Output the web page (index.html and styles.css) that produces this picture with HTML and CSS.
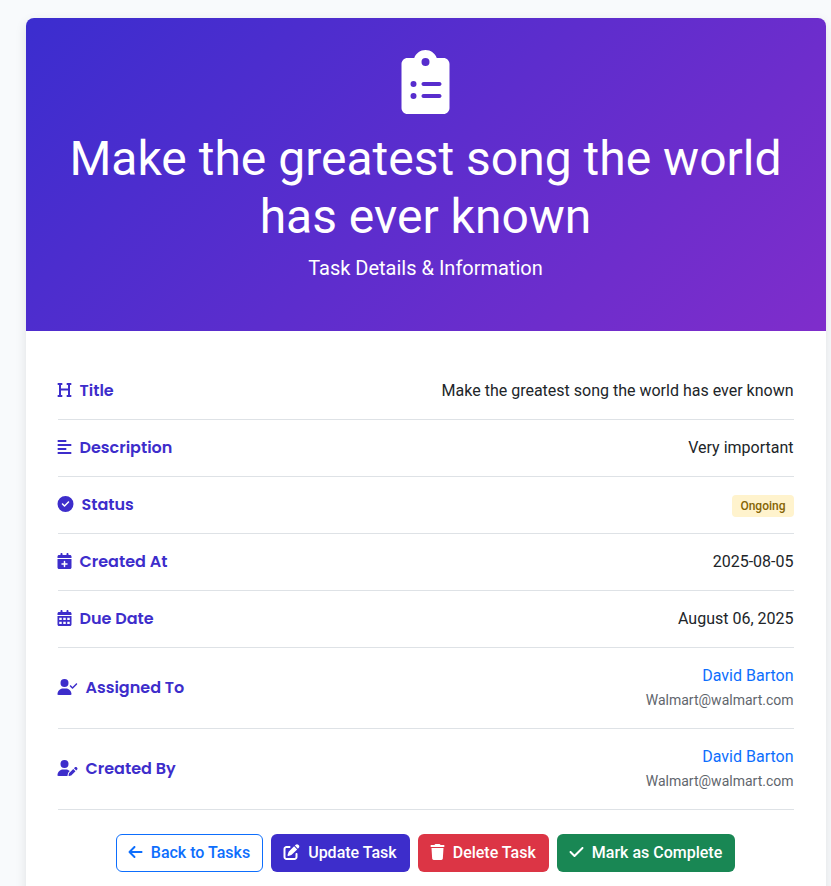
FILE: index.html
```html
<!DOCTYPE html>
<html lang="en">
<head>
<meta charset="utf-8">
<title>Task Details</title>
<link rel="stylesheet" href="styles.css">
</head>
<body>
<main class="card">
  <header class="hero">
    <svg class="hero-icon" viewBox="0 0 384 512"><path fill-rule="evenodd" d="M336 64h-53.9C268.9 26.8 233.7 0 192 0S115.1 26.8 101.9 64H48C21.5 64 0 85.5 0 112v352c0 26.500 21.500 48 48 48h288c26.500 0 48-21.500 48-48V112c0-26.500-21.500-48-48-48zM192 64a32 32 0 1 1 0 64 32 32 0 1 1 0-64zM72 272a24 24 0 1 1 48 0 24 24 0 1 1-48 0zm104-16h128c8.800 0 16 7.200 16 16s-7.200 16-16 16H176c-8.800 0-16-7.200-16-16s7.200-16 16-16zM72 368a24 24 0 1 1 48 0 24 24 0 1 1-48 0zm104-16h128c8.800 0 16 7.200 16 16s-7.200 16-16 16H176c-8.800 0-16-7.200-16-16s7.200-16 16-16z"/></svg>
    <h1>Make the greatest song the world has ever known</h1>
    <p>Task Details &amp; Information</p>
  </header>
  <div class="body">
    <div class="row">
      <div class="label"><svg class="icon" viewBox="0 0 448 512"><path d="M0 64C0 46.300 14.300 32 32 32h96c17.700 0 32 14.300 32 32s-14.300 32-32 32h-16v112h224V96h-16c-17.700 0-32-14.300-32-32s14.300-32 32-32h96c17.700 0 32 14.300 32 32s-14.300 32-32 32h-16v320h16c17.700 0 32 14.300 32 32s-14.300 32-32 32h-96c-17.700 0-32-14.300-32-32s14.300-32 32-32h16V272H112v144h16c17.700 0 32 14.300 32 32s-14.300 32-32 32H32c-17.700 0-32-14.300-32-32s14.300-32 32-32h16V96H32C14.300 96 0 81.700 0 64z"/></svg>Title</div>
      <div class="value">Make the greatest song the world has ever known</div>
    </div>
    <div class="row">
      <div class="label"><svg class="icon" viewBox="0 0 448 512"><path d="M288 64c0 17.700-14.300 32-32 32H32C14.300 96 0 81.700 0 64s14.300-32 32-32h224c17.700 0 32 14.300 32 32zm0 256c0 17.700-14.300 32-32 32H32c-17.700 0-32-14.300-32-32s14.300-32 32-32h224c17.700 0 32 14.300 32 32zM0 192c0-17.700 14.300-32 32-32h384c17.700 0 32 14.300 32 32s-14.300 32-32 32H32c-17.700 0-32-14.300-32-32zm448 256c0 17.700-14.300 32-32 32H32c-17.700 0-32-14.300-32-32s14.300-32 32-32h384c17.700 0 32 14.300 32 32z"/></svg>Description</div>
      <div class="value">Very important</div>
    </div>
    <div class="row">
      <div class="label"><svg class="icon icon-md" viewBox="0 0 512 512"><path fill-rule="evenodd" d="M256 512A256 256 0 1 0 256 0a256 256 0 1 0 0 512zM369 209L241 337c-9.400 9.400-24.600 9.400-33.900 0l-64-64c-9.400-9.400-9.400-24.600 0-33.900s24.600-9.400 33.900 0l47 47L335 175c9.400-9.400 24.600-9.400 33.900 0s9.400 24.600 0 33.900z"/></svg>Status</div>
      <div class="value"><span class="badge">Ongoing</span></div>
    </div>
    <div class="row">
      <div class="label"><svg class="icon" viewBox="0 0 448 512"><path fill-rule="evenodd" d="M96 32v32H48C21.500 64 0 85.500 0 112v48h448v-48c0-26.500-21.500-48-48-48h-48V32c0-17.700-14.300-32-32-32s-32 14.300-32 32v32H160V32c0-17.700-14.300-32-32-32S96 14.300 96 32zM448 192H0v272c0 26.500 21.500 48 48 48h352c26.500 0 48-21.500 48-48V192zM224 248c13.300 0 24 10.700 24 24v56h56c13.300 0 24 10.700 24 24s-10.700 24-24 24h-56v56c0 13.300-10.700 24-24 24s-24-10.700-24-24v-56h-56c-13.300 0-24-10.700-24-24s10.700-24 24-24h56v-56c0-13.300 10.700-24 24-24z"/></svg>Created At</div>
      <div class="value">2025-08-05</div>
    </div>
    <div class="row">
      <div class="label"><svg class="icon" viewBox="0 0 448 512"><path fill-rule="evenodd" d="M96 32v32H48C21.500 64 0 85.500 0 112v48h448v-48c0-26.500-21.500-48-48-48h-48V32c0-17.700-14.300-32-32-32s-32 14.300-32 32v32H160V32c0-17.700-14.300-32-32-32S96 14.300 96 32zM448 192H0v272c0 26.500 21.500 48 48 48h352c26.500 0 48-21.500 48-48V192zM56 248h80v72H56zm128 0h80v72h-80zm128 0h80v72h-80zM56 376h80v72H56zm128 0h80v72h-80zm128 0h80v72h-80z"/></svg>Due Date</div>
      <div class="value">August 06, 2025</div>
    </div>
    <div class="row">
      <div class="label"><svg class="icon icon-lg" viewBox="0 0 640 512"><path d="M96 128a128 128 0 1 1 256 0 128 128 0 1 1-256 0zM0 482.300C0 383.800 79.800 304 178.300 304h91.400C368.200 304 448 383.800 448 482.300c0 16.400-13.300 29.700-29.700 29.700H29.700C13.300 512 0 498.700 0 482.300zM625 177L497 305c-9.400 9.400-24.600 9.400-33.900 0l-64-64c-9.400-9.400-9.400-24.600 0-33.900s24.600-9.400 33.900 0l47 47L591 143c9.400-9.400 24.600-9.400 33.900 0s9.400 24.600 0 33.900z"/></svg>Assigned To</div>
      <div class="value"><a>David Barton</a><small>Walmart@walmart.com</small></div>
    </div>
    <div class="row">
      <div class="label"><svg class="icon icon-lg" viewBox="0 0 640 512"><path d="M224 256A128 128 0 1 0 224 0a128 128 0 1 0 0 256zm-45.700 48C79.800 304 0 383.800 0 482.300 0 498.700 13.300 512 29.700 512h293.100c-3.100-8.800-3.700-18.400-1.400-27.800l15-60.100c2.800-11.300 8.600-21.500 16.800-29.700l40.300-40.300c-32.100-31-75.700-50.100-123.900-50.100zm435.500-68.300c-15.600-15.600-40.900-15.600-56.600 0l-29.400 29.400 71 71 29.400-29.400c15.600-15.600 15.600-40.900 0-56.600zM375.900 417c-4.100 4.100-7 9.200-8.400 14.900l-15 60.100c-1.400 5.500.2 11.200 4.200 15.200s9.700 5.600 15.200 4.200l60.100-15c5.600-1.400 10.800-4.300 14.900-8.400l129.200-129.300-71-71z"/></svg>Created By</div>
      <div class="value"><a>David Barton</a><small>Walmart@walmart.com</small></div>
    </div>
    <div class="actions">
      <button class="btn outline"><svg class="icon" viewBox="0 0 448 512"><path d="M9.400 233.400c-12.500 12.500-12.500 32.800 0 45.300l160 160c12.500 12.500 32.800 12.500 45.300 0s12.500-32.800 0-45.300L109.200 288H416c17.700 0 32-14.300 32-32s-14.300-32-32-32H109.300l105.300-105.400c12.500-12.500 12.500-32.800 0-45.300s-32.800-12.500-45.300 0z"/></svg>Back to Tasks</button>
      <button class="btn primary"><svg class="icon icon-md" viewBox="0 0 512 512"><path d="M471.600 21.700c-21.900-21.900-57.300-21.900-79.200 0l-30.100 30 97.900 97.900 30.100-30.100c21.900-21.900 21.900-57.300 0-79.200zm-299.200 220c-6.100 6.100-10.800 13.600-13.500 21.900l-29.600 88.800c-2.900 8.600-.6 18.100 5.800 24.600s15.900 8.700 24.600 5.800l88.800-29.600c8.200-2.700 15.700-7.400 21.900-13.500l167.300-167.400-98-98zM96 64C43 64 0 107 0 160v256c0 53 43 96 96 96h256c53 0 96-43 96-96v-96c0-17.700-14.300-32-32-32s-32 14.300-32 32v96c0 17.700-14.300 32-32 32H96c-17.700 0-32-14.300-32-32V160c0-17.700 14.300-32 32-32h96c17.700 0 32-14.300 32-32s-14.300-32-32-32z"/></svg>Update Task</button>
      <button class="btn danger"><svg class="icon" viewBox="0 0 448 512"><path d="M135.200 17.700C140.600 6.800 151.700 0 163.800 0h120.400c12.100 0 23.200 6.800 28.600 17.700L320 32h96c17.700 0 32 14.300 32 32s-14.300 32-32 32H32C14.300 96 0 81.700 0 64s14.300-32 32-32h96zM32 128h384l-21.200 339c-1.600 25.300-22.600 45-47.900 45H101.100c-25.300 0-46.300-19.700-47.900-45z"/></svg>Delete Task</button>
      <button class="btn success"><svg class="icon" viewBox="0 0 448 512"><path d="M438.600 105.400c12.500 12.500 12.500 32.800 0 45.300l-256 256c-12.500 12.500-32.800 12.500-45.300 0l-128-128c-12.500-12.500-12.500-32.800 0-45.300s32.800-12.500 45.300 0L160 338.700l233.400-233.300c12.500-12.500 32.800-12.500 45.300 0z"/></svg>Mark as Complete</button>
    </div>
  </div>
</main>
</body>
</html>
```
FILE: styles.css
```css
* { box-sizing: border-box; }
html { overflow: hidden; }
body {
  margin: 0;
  padding: 18px 5px 0 25.5px;
  height: 886px;
  overflow: hidden;
  background: #f8fafc;
  color: #212529;
  font: 400 16px/24px Roboto, sans-serif;
}
.card {
  width: 800px;
  background: #fff;
  border-radius: 8px;
  overflow: hidden;
  box-shadow: 0 4px 12px rgba(0, 0, 0, .1);
}
.hero {
  height: 313px;
  padding: 32px;
  color: #fff;
  text-align: center;
  background: linear-gradient(135deg, #3b2dcf, #7f2dcb);
}
.hero-icon {
  display: block;
  width: 48px;
  height: 64px;
  margin: 0 auto 16px;
  overflow: visible;
  fill: currentColor;
}
.hero-icon path { transform: translateX(-4px); }
.icon path { transform: translateX(-16px); }
h1 { margin: 0 0 8px; font-size: 48px; font-weight: 400; line-height: 57.6px; }
.hero p { margin: 0; font-size: 20px; line-height: 30px; }
.body { padding: 32px; }
.row {
  display: flex;
  align-items: center;
  justify-content: space-between;
  padding: 16px 0;
  border-bottom: 1px solid #dee2e6;
}
.label {
  display: flex;
  align-items: center;
  gap: 8px;
  color: #3d2dcb;
  font-family: Poppins, Inter, sans-serif;
  font-weight: 600;
}
.icon { width: 14px; height: 16px; margin-bottom: 2px; overflow: visible; fill: currentColor; flex: none; }
.icon-md { width: 16px; }
.icon-lg { width: 20px; }
.value { display: flex; flex-direction: column; align-items: flex-end; }
.value a { color: #0d6efd; }
.value small { font-size: 14px; color: #5f666d; }
.badge {
  margin: 1px 0 -1px;
  padding: 5px 8px;
  border-radius: 4px;
  background: #fff3cd;
  color: #856404;
  font-size: 12px;
  font-weight: 500;
  line-height: 12px;
}
.actions { display: flex; justify-content: center; gap: 8px; margin-top: 24px; }
.btn {
  display: flex;
  align-items: center;
  gap: 8px;
  height: 38px;
  padding: 0 12px;
  border: 1px solid transparent;
  border-radius: 6px;
  color: #fff;
  font: 500 16px/24px Roboto, sans-serif;
  white-space: nowrap;
}
.outline { background: #fff; border-color: #0d6efd; color: #0d6efd; }
.primary { background: #3d2dcb; }
.danger { background: #dc3545; }
.success { background: #198754; }
```
